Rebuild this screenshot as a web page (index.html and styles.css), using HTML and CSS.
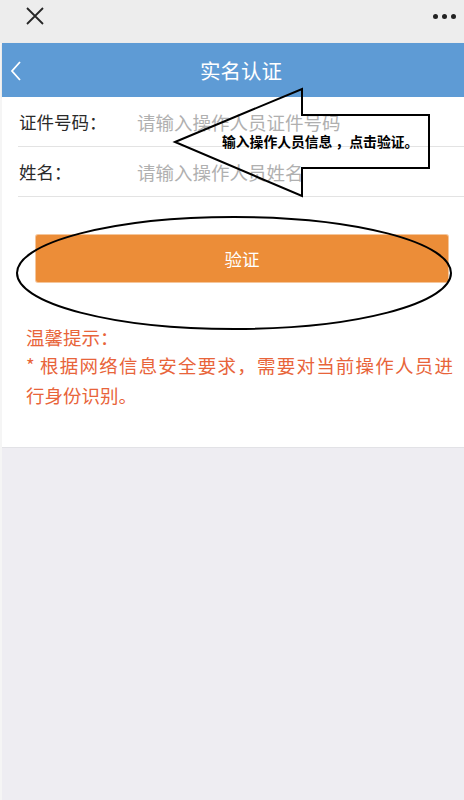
FILE: index.html
```html
<!DOCTYPE html>
<html lang="zh-CN">
<head>
<meta charset="utf-8">
<title>实名认证</title>
<link rel="stylesheet" href="styles.css">
</head>
<body>
<div class="topbar">
  <svg class="close" width="20" height="20" viewBox="0 0 20 20"><path d="M2 2 L18 18 M18 2 L2 18" stroke="#262626" stroke-width="1.8" fill="none"/></svg>
  <div class="dots"><span></span><span></span><span></span></div>
</div>
<div class="page">
  <div class="header">
    <svg class="back" width="14" height="22" viewBox="0 0 14 22"><path d="M11 2 L3 11 L11 20" stroke="#fff" stroke-width="1.8" fill="none"/></svg>
    <div class="title">实名认证</div>
    <div></div>
  </div>
  <div class="card">
    <div class="form">
      <div class="row"><span class="label">证件号码：</span><span class="ph">请输入操作人员证件号码</span></div>
      <div class="row"><span class="label">姓名：</span><span class="ph">请输入操作人员姓名</span></div>
    </div>
    <div class="btn-wrap"><div class="btn">验证</div></div>
    <div class="tips">
      <div class="tips-title">温馨提示：</div>
      <div class="tips-body"><span class="line-full">* 根据网络信息安全要求，需要对当前操作人员进</span><span>行身份识别。</span></div>
    </div>
  </div>
  <div class="rest"></div>
</div>
<svg class="overlay" width="464" height="800" viewBox="0 0 464 800">
  <polygon points="175,142 302,89 302,115 429,115 429,168 302,168 302,196" fill="none" stroke="#000" stroke-width="2" stroke-linejoin="miter"/>
  <text x="222" y="147" class="note">输入操作人员信息 ，点击验证。</text>
  <ellipse cx="234" cy="273" rx="217" ry="56" fill="none" stroke="#000" stroke-width="2"/>
</svg>
</body>
</html>
```
FILE: styles.css
```css
html, body {
  margin: 0;
  padding: 0;
}
body {
  width: 464px;
  height: 800px;
  overflow: hidden;
  background: #eeedf2;
  font-family: "Noto Sans CJK SC", "Noto Sans", sans-serif;
  position: relative;
}
.topbar {
  height: 43px;
  background: #ededed;
  display: flex;
  justify-content: space-between;
  align-items: flex-start;
  padding: 0 8px 0 25px;
}
.close {
  margin-top: 6px;
}
.dots {
  display: flex;
  gap: 4px;
  margin-top: 14px;
}
.dots span {
  width: 5px;
  height: 5px;
  border-radius: 50%;
  background: #222;
}
.page {
  border-left: 2px solid #f5f5f5;
  height: 757px;
  display: flex;
  flex-direction: column;
}
.header {
  height: 54px;
  background: #5e9bd5;
  display: grid;
  grid-template-columns: 40px 1fr 40px;
  align-items: center;
  box-shadow: 0 1px 2px rgba(0,0,0,0.12);
}
.back {
  margin-left: 7px;
  margin-top: 1px;
}
.title {
  text-align: center;
  color: #fff;
  font-size: 20.5px;
  line-height: 54px;
  padding-left: 16px;
}
.card {
  background: #fff;
  height: 350px;
  border-bottom: 1px solid #e2e2e6;
}
.form {
  padding-left: 16px;
}
.row {
  height: 49px;
  border-bottom: 1px solid #e3e3e3;
  display: flex;
  align-items: center;
}
.label {
  width: 118px;
  padding-left: 1px;
  font-size: 17.5px;
  color: #2a2a2a;
}
.ph {
  font-size: 18.5px;
  color: #b0b0b0;
}
.btn-wrap {
  padding: 38px 16px 0 34px;
}
.btn {
  height: 47px;
  background: #ec8d38;
  border-radius: 2px;
  color: #fff;
  font-size: 17.5px;
  display: flex;
  align-items: center;
  justify-content: center;
  box-shadow: 0 0 0 1px rgba(236,141,56,0.5);
}
.tips {
  padding: 43px 11px 0 24px;
  color: #e8643a;
  font-size: 18.5px;
}
.tips-title {
  line-height: 25px;
}
.tips-body {
  line-height: 30px;
}
.line-full {
  display: block;
  text-align: justify;
  text-align-last: justify;
  white-space: nowrap;
}
.rest {
  flex: 1;
}
.overlay {
  position: absolute;
  left: 0;
  top: 0;
  pointer-events: none;
}
.note {
  font-family: "Noto Sans CJK SC", sans-serif;
  font-weight: bold;
  font-size: 13.8px;
  fill: #000;
}
```
